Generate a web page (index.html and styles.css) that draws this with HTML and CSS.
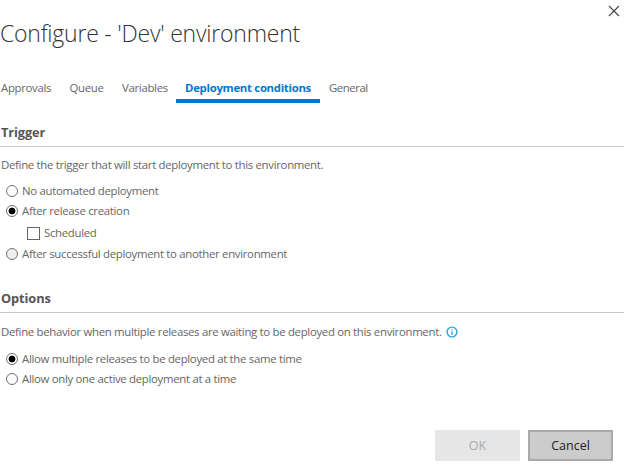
FILE: index.html
```html
<!DOCTYPE html>
<html lang="en">
<head>
<meta charset="utf-8">
<title>Configure - 'Dev' environment</title>
<link rel="stylesheet" href="styles.css">
</head>
<body>
<main class="dialog">
  <header class="header">
    <h1 class="title">Configure - 'Dev' environment</h1>
    <svg class="close" width="12" height="12" viewBox="0 0 12 12"><path d="M1 1L11 11M11 1L1 11"/></svg>
  </header>
  <nav class="tabs">
    <span class="tab approvals">Approvals</span>
    <span class="tab queue">Queue</span>
    <span class="tab variables">Variables</span>
    <span class="tab active">Deployment conditions</span>
    <span class="tab general">General</span>
  </nav>
  <section class="trigger">
    <h2 class="heading">Trigger</h2>
    <p class="description">Define the trigger that will start deployment to this environment.</p>
    <label class="choice"><i class="radio"></i><span>No automated deployment</span></label>
    <label class="choice"><i class="radio checked"></i><span>After release creation</span></label>
    <label class="choice nested"><i class="checkbox"></i><span>Scheduled</span></label>
    <label class="choice"><i class="radio disabled"></i><span>After successful deployment to another environment</span></label>
  </section>
  <section class="options">
    <h2 class="heading">Options</h2>
    <p class="description"><span>Define behavior when multiple releases are waiting to be deployed on this environment.</span>
      <svg class="info" width="12" height="12" viewBox="0 0 12 12"><circle cx="6" cy="6" r="4.9"/><path d="M6 5.2V8.8M6 3.2V4.3"/></svg>
    </p>
    <label class="choice"><i class="radio checked"></i><span>Allow multiple releases to be deployed at the same time</span></label>
    <label class="choice"><i class="radio"></i><span>Allow only one active deployment at a time</span></label>
  </section>
  <footer class="actions">
    <button class="button ok" disabled>OK</button>
    <button class="button cancel">Cancel</button>
  </footer>
</main>
</body>
</html>
```
FILE: styles.css
```css
* { box-sizing: border-box; }
body {
  margin: 0;
  background: #fff;
  color: #666;
  font: 11.4px/20px "Open Sans", "Noto Sans", sans-serif;
  letter-spacing: -0.31px;
}
.dialog {
  display: flex;
  flex-direction: column;
  width: 624px;
  height: 464px;
  overflow: hidden;
  white-space: nowrap;
}
.header {
  display: flex;
  justify-content: space-between;
  height: 78px;
  padding: 5px 4px 0 0;
}
.title {
  margin: 12px 0 0;
  color: #333;
  font-size: 23px;
  font-weight: 300;
  line-height: 32px;
  letter-spacing: -0.22px;
}
.close { fill: none; stroke: #444; stroke-width: 1.1; }
.tabs { display: flex; height: 25px; padding-left: 1px; }
.tab { height: 25px; line-height: 20px; }
.approvals { width: 68.5px; }
.queue { width: 52.5px; }
.variables { width: 54px; }
.active {
  width: 144px;
  margin-right: 9px;
  border-bottom: 4px solid #0078d0;
  color: #0078d0;
  font-weight: 700;
  text-align: center;
}
.general { letter-spacing: -0.45px; }
.trigger { height: 166px; padding-top: 19px; }
.options { padding-top: 19px; }
.heading {
  height: 25px;
  margin: 0;
  padding-left: 1px;
  border-bottom: 1px solid #c8c8c8;
  color: #555;
  font-size: 12.8px;
  letter-spacing: -0.1px;
  line-height: 21px;
}
.description {
  display: flex;
  align-items: center;
  gap: 5px;
  height: 20px;
  margin: 8px 0 6px;
  padding-left: 1px;
}
.options .description { margin: 9px 0 7px; gap: 4px; }
.info { fill: none; stroke: #2ba5e0; stroke-width: 1.4; }
.choice {
  display: flex;
  align-items: center;
  gap: 4px;
  height: 20px;
  padding-left: 5.5px;
}
.nested { height: 24px; margin-bottom: -1px; padding-left: 27px; }
.radio {
  width: 12.5px;
  height: 12.5px;
  border: 1px solid #707070;
  border-radius: 50%;
}
.checked { background: radial-gradient(circle, #000 0 3px, #fff 3.8px); }
.disabled { background: #eee; }
.checkbox { width: 13px; height: 13px; border: 1px solid #666; }
.actions {
  display: flex;
  justify-content: flex-end;
  gap: 8px;
  margin-top: auto;
  padding: 0 11px 3px 0;
}
.button {
  width: 85px;
  height: 31px;
  padding: 0;
  border: 0;
  font: 12.5px/32px "Open Sans", sans-serif;
}
.ok { background: #e6e6e6; color: #aaa; }
.cancel { border: 2px solid #aaa; background: #ccc; color: #222; line-height: 28px; }
```
